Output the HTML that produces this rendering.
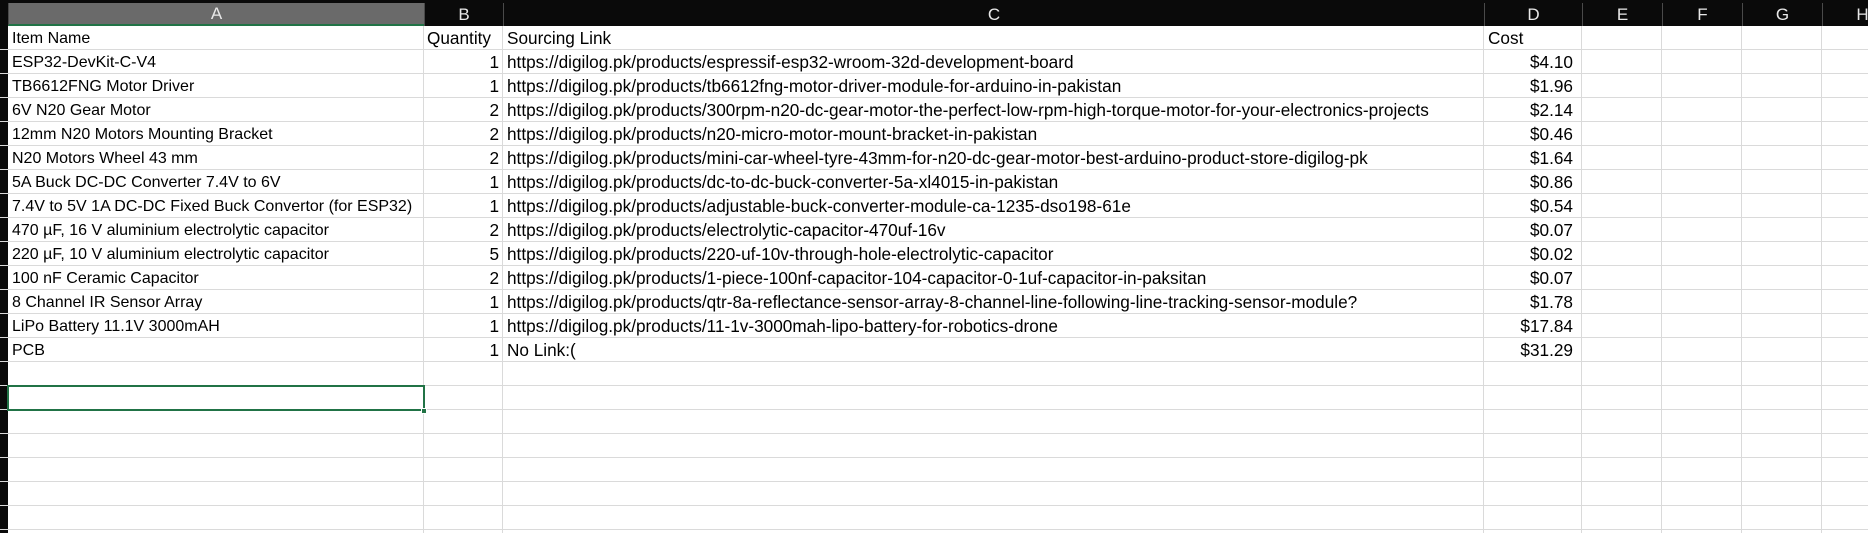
<!DOCTYPE html>
<html><head><meta charset="utf-8"><style>
*{margin:0;padding:0;box-sizing:border-box}
body{width:1868px;height:533px;overflow:hidden;background:#fff;position:relative;font-family:"Liberation Sans",Arial,sans-serif;font-size:17.2px;color:#000}
.top{position:absolute;left:0;top:0;width:1868px;height:26px;background:#0a0a0a}
.ch{position:absolute;top:3px;height:23px;color:#e8e8e8;font-size:17px;text-align:center;line-height:23px;border-left:1px solid #4a4a4a}
.rh{position:absolute;left:0;top:26px;width:8px;height:507px;background:#0a0a0a}
.hl{position:absolute;left:0;height:1px;width:1868px;background:#dadada}
.vl{position:absolute;top:26px;width:1px;height:507px;background:#dadada}
.t{position:absolute;height:24px;line-height:25px;white-space:nowrap}
.a{font-size:16px;width:410px;overflow:hidden}
.r{text-align:right}
</style></head><body>
<div class="top"></div>
<div class="ch" style="left:8px;width:416px;background:#6a6a6a;border-bottom:2px solid #217346;line-height:22px">A</div>
<div class="ch" style="left:424px;width:79px">B</div>
<div class="ch" style="left:503px;width:981px">C</div>
<div class="ch" style="left:1484px;width:98px">D</div>
<div class="ch" style="left:1582px;width:80px">E</div>
<div class="ch" style="left:1662px;width:80px">F</div>
<div class="ch" style="left:1742px;width:80px">G</div>
<div class="ch" style="left:1822px;width:80px">H</div>
<div class="rh"></div>
<div id="g"></div>
<script>
var g='';
for(var k=1;k<=21;k++){g+='<div class="hl" style="top:'+(25+24*k)+'px"></div>';}
[424,503,1484,1582,1662,1742,1822].forEach(function(x){g+='<div class="vl" style="left:'+(x-1)+'px"></div>';});
var rows=[
["Item Name","Quantity","Sourcing Link","Cost"],
["ESP32-DevKit-C-V4","1","https://digilog.pk/products/espressif-esp32-wroom-32d-development-board","$4.10"],
["TB6612FNG Motor Driver","1","https://digilog.pk/products/tb6612fng-motor-driver-module-for-arduino-in-pakistan","$1.96"],
["6V N20 Gear Motor","2","https://digilog.pk/products/300rpm-n20-dc-gear-motor-the-perfect-low-rpm-high-torque-motor-for-your-electronics-projects","$2.14"],
["12mm N20 Motors Mounting Bracket","2","https://digilog.pk/products/n20-micro-motor-mount-bracket-in-pakistan","$0.46"],
["N20 Motors Wheel 43 mm","2","https://digilog.pk/products/mini-car-wheel-tyre-43mm-for-n20-dc-gear-motor-best-arduino-product-store-digilog-pk","$1.64"],
["5A Buck DC-DC Converter 7.4V to 6V","1","https://digilog.pk/products/dc-to-dc-buck-converter-5a-xl4015-in-pakistan","$0.86"],
["7.4V to 5V 1A DC-DC Fixed Buck Convertor (for ESP32)","1","https://digilog.pk/products/adjustable-buck-converter-module-ca-1235-dso198-61e","$0.54"],
["470 µF, 16 V aluminium electrolytic capacitor","2","https://digilog.pk/products/electrolytic-capacitor-470uf-16v","$0.07"],
["220 µF, 10 V aluminium electrolytic capacitor","5","https://digilog.pk/products/220-uf-10v-through-hole-electrolytic-capacitor","$0.02"],
["100 nF Ceramic Capacitor","2","https://digilog.pk/products/1-piece-100nf-capacitor-104-capacitor-0-1uf-capacitor-in-paksitan","$0.07"],
["8 Channel IR Sensor Array","1","https://digilog.pk/products/qtr-8a-reflectance-sensor-array-8-channel-line-following-line-tracking-sensor-module?","$1.78"],
["LiPo Battery 11.1V 3000mAH","1","https://digilog.pk/products/11-1v-3000mah-lipo-battery-for-robotics-drone","$17.84"],
["PCB","1","No Link:(","$31.29"]];
rows.forEach(function(r,i){var y=26+24*i;
g+='<div class="t a" style="left:12px;top:'+y+'px">'+r[0]+'</div>';
g+='<div class="t'+(i?' r':'')+'" style="'+(i?'left:424px;width:75px':'left:427px')+';top:'+y+'px">'+r[1]+'</div>';
g+='<div class="t" style="left:507px;top:'+y+'px">'+r[2]+'</div>';
g+='<div class="t'+(i?' r':'')+'" style="'+(i?'left:1484px;width:89px':'left:1488px')+';top:'+y+'px">'+r[3]+'</div>';});
g+='<div style="position:absolute;left:7px;top:385px;width:418px;height:26px;border:2px solid #217346"></div>';
g+='<div style="position:absolute;left:421px;top:408px;width:6px;height:6px;background:#217346;border:1px solid #fff"></div>';
document.getElementById('g').innerHTML=g;
</script>
</body></html>
